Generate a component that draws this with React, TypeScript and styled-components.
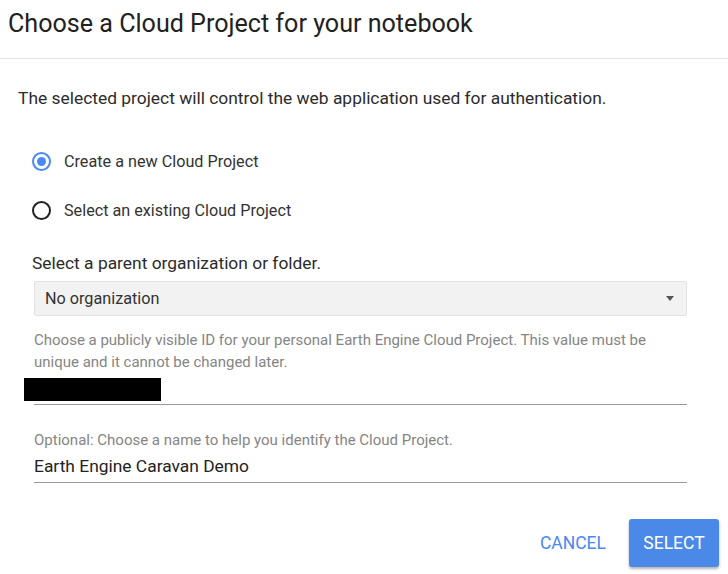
import React from "react";
import styled, { createGlobalStyle } from "styled-components";

const Global = createGlobalStyle`
  html, body { margin: 0; padding: 0; background: #fff; }
  body { font-family: Roboto, "Liberation Sans", Arial, sans-serif; }
`;

const Dialog = styled.div`
  width: 728px;
  height: 574px;
  background: #fff;
  display: flex;
  flex-direction: column;
  overflow: hidden;
`;

const Header = styled.div`
  height: 58px;
  border-bottom: 1px solid #e3e3e3;
  padding: 0 8px;
  display: flex;
  align-items: flex-start;
`;

const Title = styled.h1`
  margin: 9px 0 0 0;
  font-size: 25.1px;
  line-height: 30px;
  font-weight: 400;
  color: #212121;
`;

const Intro = styled.p`
  margin: 28px 0 0 18px;
  height: 22px;
  line-height: 22px;
  font-size: 17.4px;
  color: #2b2b2b;
`;

const RadioGroup = styled.div`
  margin: 42px 0 0 32px;
  display: flex;
  flex-direction: column;
  gap: 29px;
`;

const RadioRow = styled.label`
  display: flex;
  align-items: center;
  gap: 13px;
  height: 20px;
  font-size: 16.2px;
  color: #333;
`;

const RadioCircle = styled.span<{ $checked?: boolean }>`
  box-sizing: border-box;
  width: 19px;
  height: 19px;
  border-radius: 50%;
  border: 2px solid ${(p) => (p.$checked ? "#4a89f3" : "#212121")};
  display: flex;
  align-items: center;
  justify-content: center;
  &::after {
    content: "";
    display: ${(p) => (p.$checked ? "block" : "none")};
    width: 9px;
    height: 9px;
    border-radius: 50%;
    background: #4a89f3;
  }
`;

const Form = styled.div`
  margin: 0 41px 0 32px;
  display: flex;
  flex-direction: column;
`;

const SectionLabel = styled.div`
  margin-top: 32px;
  height: 22px;
  line-height: 22px;
  font-size: 17.4px;
  color: #2b2b2b;
`;

const SelectBox = styled.div`
  margin: 7px 0 0 2px;
  box-sizing: border-box;
  height: 35px;
  border: 1px solid #e2e2e2;
  border-radius: 2px;
  background: #f2f2f2;
  display: flex;
  align-items: center;
  justify-content: space-between;
  padding: 0 12px 0 10px;
  font-size: 16.2px;
  color: #333;
`;

const Caret = styled.span`
  width: 0;
  height: 0;
  border-left: 4.5px solid transparent;
  border-right: 4.5px solid transparent;
  border-top: 5px solid #555;
`;

const Helper = styled.div<{ $top: number }>`
  margin: ${(p) => p.$top}px 0 0 2px;
  font-size: 15px;
  line-height: 22px;
  color: #858585;
`;

const Field = styled.div<{ $top: number; $height: number }>`
  margin: ${(p) => p.$top}px 0 0 2px;
  border-bottom: 1px solid #9a9a9a;
  height: ${(p) => p.$height}px;
  display: flex;
  align-items: flex-start;
  font-size: 17.4px;
  color: #222;
`;

const Redacted = styled.div`
  margin-left: -10px;
  width: 137px;
  height: 23px;
  background: #000;
`;

const Value = styled.span`
  line-height: 20px;
  margin-top: 5px;
`;

const Actions = styled.div`
  margin-top: 36px;
  padding-right: 9px;
  display: flex;
  justify-content: flex-end;
  align-items: center;
  gap: 12px;
`;

const TextButton = styled.button`
  border: none;
  background: transparent;
  font-family: inherit;
  font-size: 17.5px;
  color: #4a89f3;
  padding: 0 11px;
  height: 48px;
  cursor: pointer;
`;

const PrimaryButton = styled.button`
  border: none;
  background: #4a89e8;
  color: #fff;
  font-family: inherit;
  font-size: 17.5px;
  width: 90px;
  height: 48px;
  border-radius: 3px;
  box-shadow: 0 2px 3px rgba(0, 0, 0, 0.3);
  cursor: pointer;
`;

export default function App() {
  return (
    <>
      <Global />
      <Dialog>
        <Header>
          <Title>Choose a Cloud Project for your notebook</Title>
        </Header>
        <Intro>The selected project will control the web application used for authentication.</Intro>
        <RadioGroup>
          <RadioRow>
            <RadioCircle $checked />
            Create a new Cloud Project
          </RadioRow>
          <RadioRow>
            <RadioCircle />
            Select an existing Cloud Project
          </RadioRow>
        </RadioGroup>
        <Form>
          <SectionLabel>Select a parent organization or folder.</SectionLabel>
          <SelectBox>
            <span>No organization</span>
            <Caret />
          </SelectBox>
          <Helper $top={13}>
            Choose a publicly visible ID for your personal Earth Engine Cloud Project. This value must be
            unique and it cannot be changed later.
          </Helper>
          <Field $top={5} $height={26}>
            <Redacted />
          </Field>
          <Helper $top={24}>Optional: Choose a name to help you identify the Cloud Project.</Helper>
          <Field $top={0} $height={31}>
            <Value>Earth Engine Caravan Demo</Value>
          </Field>
        </Form>
        <Actions>
          <TextButton>CANCEL</TextButton>
          <PrimaryButton>SELECT</PrimaryButton>
        </Actions>
      </Dialog>
    </>
  );
}
